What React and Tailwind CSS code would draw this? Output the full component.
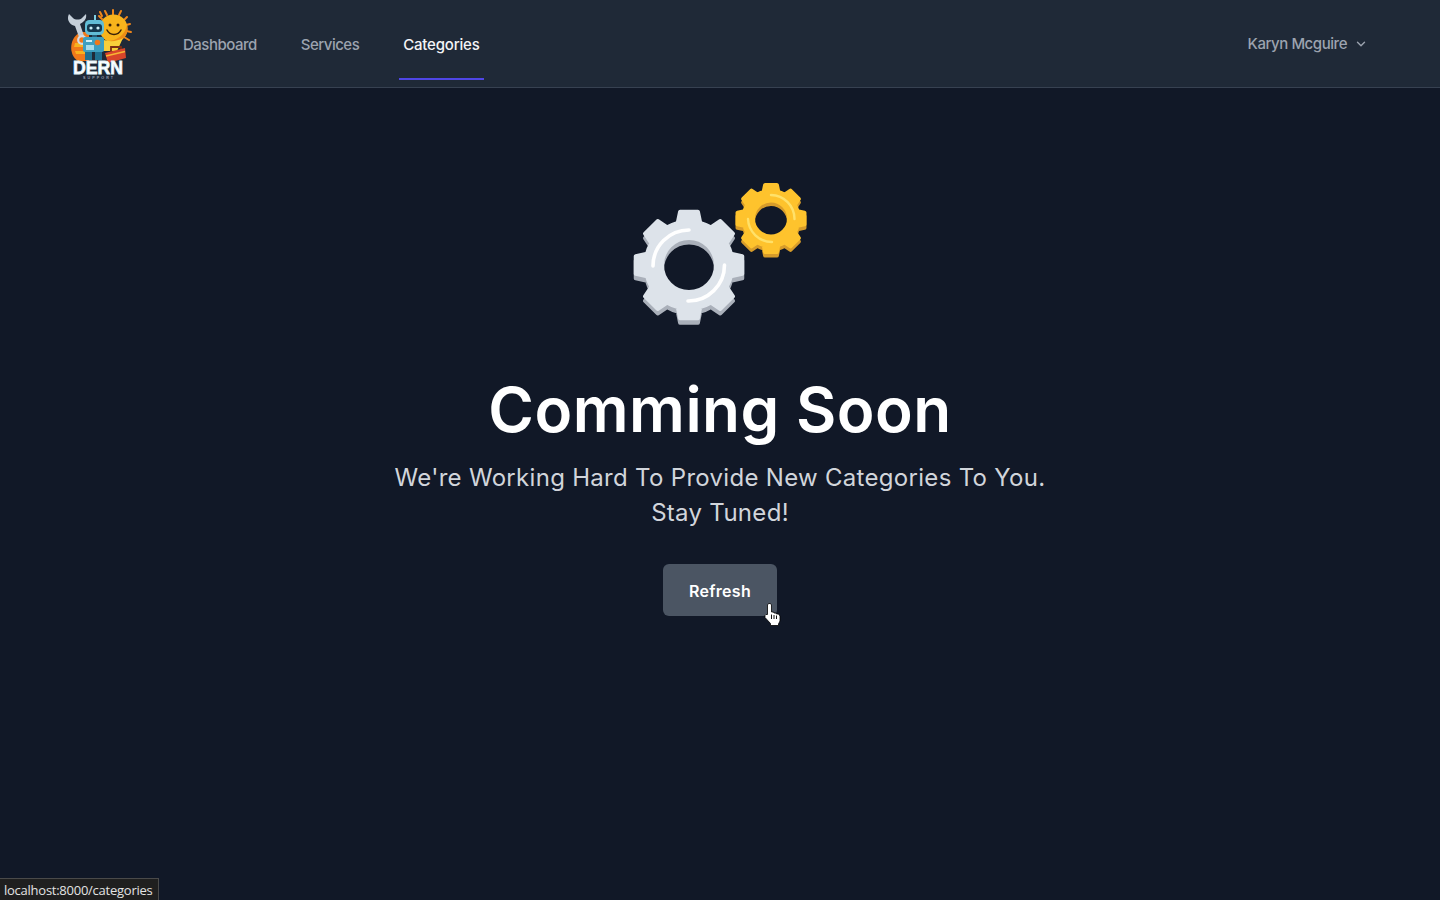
import React from 'react';
import { ChevronDown } from 'lucide-react';

// builds an 8-tooth gear outline with a hole, used for both the grey and yellow gears
const gearPath = (cx, cy, tip, root, tipHalf, rootHalf, hole) => {
  const pt = (r, deg) => {
    const a = ((deg - 90) * Math.PI) / 180;
    return `${(cx + r * Math.cos(a)).toFixed(2)} ${(cy + r * Math.sin(a)).toFixed(2)}`;
  };
  let d = '';
  for (let i = 0; i < 8; i++) {
    const c = i * 45;
    d += `${i === 0 ? 'M' : `A${root} ${root} 0 0 1`} ${pt(root, c - rootHalf)} `;
    d += `L${pt(tip, c - tipHalf)} L${pt(tip, c + tipHalf)} L${pt(root, c + rootHalf)} `;
  }
  d += `A${root} ${root} 0 0 1 ${pt(root, -rootHalf)} Z `;
  d += `M${cx - hole} ${cy} A${hole} ${hole} 0 1 0 ${cx + hole} ${cy} A${hole} ${hole} 0 1 0 ${cx - hole} ${cy} Z`;
  return d;
};

const Gears = () => (
  <svg width="176" height="146" viewBox="632 181 176 146" className="block">
    {/* grey gear */}
    <path d={gearPath(689, 269.500, 54, 43.500, 9.500, 15, 27)} fill="#aab0ba" stroke="#aab0ba" strokeWidth="4" strokeLinejoin="round" fillRule="evenodd" />
    <path d={gearPath(689, 265, 54, 43.500, 9.500, 15, 27)} fill="#dde3ea" stroke="#dde3ea" strokeWidth="4" strokeLinejoin="round" fillRule="evenodd" />
    <path d="M653 266A36 36 0 0 1 689 230" fill="none" stroke="#fff" strokeWidth="3.6" strokeLinecap="round" />
    <path d="M724.500 265A36 36 0 0 1 688 301" fill="none" stroke="#fff" strokeWidth="3.6" strokeLinecap="round" />
    {/* yellow gear */}
    <path d={gearPath(771, 222, 34, 27.500, 10, 15.500, 18)} fill="#d79c2a" stroke="#d79c2a" strokeWidth="4" strokeLinejoin="round" fillRule="evenodd" />
    <path d={gearPath(771, 218.500, 34, 27.500, 10, 15.500, 18)} fill="#fec32d" stroke="#fec32d" strokeWidth="4" strokeLinejoin="round" fillRule="evenodd" />
    <path d="M771 195A24 24 0 0 1 794.500 219" fill="none" stroke="#ffe169" strokeWidth="2.4" strokeLinecap="round" />
    <path d="M748 219A24 24 0 0 0 772 242" fill="none" stroke="#ffe169" strokeWidth="2.4" strokeLinecap="round" />
  </svg>
);

const Logo = () => (
  <svg width="66" height="72" viewBox="0 0 66 72" className="block shrink-0">
    {/* sun rays */}
    <g stroke="#f0861a" strokeWidth="2" strokeLinecap="round">
      <path d="M46 1V6M38 2l2 4M54 2l-2 4M32 7l3 3M60 8l-3 3M63 15l-4 1M64 23l-5-1M62 31l-5-3M33 3l2 4" />
    </g>
    <circle cx="46.500" cy="19.500" r="14" fill="#f8b41c" />
    <path d="M60 16A14 14 0 0 1 40 32C50 32 58 26 60 16Z" fill="#ee8c17" />
    <circle cx="43" cy="16" r="1.500" fill="#3b2208" />
    <circle cx="51" cy="16" r="1.500" fill="#3b2208" />
    <path d="M40 21c3 6 11 6 14 0" fill="none" stroke="#3b2208" strokeWidth="1.500" strokeLinecap="round" />
    {/* orange backdrop, yellow shoulder */}
    <path d="M14 23C2 28 1 46 11 52H22V23Z" fill="#f0791a" />
    <path d="M8 34 20 34 20 38 7 38ZM8 42 20 42 20 45 9 45Z" fill="#f9b21e" />
    <path d="M34 30C42 33 49 33 56 29L50 42H36Z" fill="#f8cf3a" />
    {/* wrench */}
    <path d="M2 5C-1 11 3 16 8 17L12 28L17 27L13 15C17 13 20 10 19 5L15 9C13 11 8 11 6 9Z" fill="#c5cfd9" />
    <circle cx="15" cy="31" r="3.800" fill="none" stroke="#d5dde5" strokeWidth="2.200" />
    {/* robot */}
    <rect x="27" y="6" width="2" height="5" fill="#7fcfe2" />
    <rect x="18" y="11" width="19" height="15" rx="4.500" fill="#62bdd6" />
    <rect x="20" y="15" width="15" height="8" rx="3" fill="#15384d" />
    <circle cx="24" cy="19" r="1.600" fill="#cdeff7" />
    <circle cx="31" cy="19" r="1.600" fill="#cdeff7" />
    <rect x="25" y="26" width="5" height="2" fill="#245b75" />
    <rect x="16" y="28" width="21" height="15" rx="2" fill="#3d9fc0" />
    <circle cx="30.500" cy="33.500" r="2.800" fill="#f0781a" />
    <rect x="19" y="31" width="6" height="2" fill="#cdeff7" />
    <rect x="19" y="36" width="8" height="5" fill="#a7dcea" />
    <rect x="18" y="43" width="7" height="8" fill="#1f6f8f" />
    <rect x="28" y="43" width="7" height="8" fill="#1f6f8f" />
    {/* toolbox */}
    <path d="M44 43V38H54V41" fill="none" stroke="#7c2d12" strokeWidth="1.800" />
    <path d="M38 44 58 39 59 49 41 54Z" fill="#d8452a" />
    <path d="M39 47 58 42.500" stroke="#f7b733" strokeWidth="1.500" />
    {/* wordmark */}
    <text x="31" y="65" textAnchor="middle" fontFamily="'Liberation Sans', sans-serif" fontWeight="700" fontSize="18" fill="#ffffff" stroke="#dff3fa" strokeWidth="0.8" textLength="50" lengthAdjust="spacingAndGlyphs">DERN</text>
    <text x="31" y="70" textAnchor="middle" fontFamily="'Liberation Sans', sans-serif" fontSize="3.6" fill="#cfd8e3" textLength="30">SUPPORT</text>
  </svg>
);

const HandCursor = () => (
  <svg width="17" height="23" viewBox="0 0 17 23" className="absolute left-[764px] top-[603px]">
    <path d="M4.500.5H6.500L7.500 2V9H9.500L10 10H12L12.500 11H14.500L16 13V18L14.500 21V22.500H6.500V20.500L1 14.500V12.500L2 11.500H3.500V2Z" fill="#fff" stroke="#000" strokeWidth="0.8" strokeLinejoin="round" />
    <path d="M7.500 11.500V16M10 12V16M12.500 12.500V16" stroke="#111" strokeWidth="1" />
  </svg>
);

const NavLink = ({ children, active }) => (
  <a
    href="#"
    className={
      active
        ? 'inline-flex h-20 items-center border-b-2 border-[#4f46e5] px-1 pt-[13px] text-[15px] font-medium tracking-[-0.2px] text-[#f3f4f6]'
        : 'inline-flex h-20 items-center border-b-2 border-transparent px-1 pt-[13px] text-[15px] font-medium tracking-[-0.5px] text-[#9ca3af]'
    }
  >
    {children}
  </a>
);

export default function App() {
  return (
    <div className="relative h-[900px] overflow-hidden bg-[#111827] font-['Inter','Noto_Sans',sans-serif]">
      <nav className="flex h-[88px] items-start justify-between border-b border-[#374151] bg-[#1f2937] pl-[67px] pr-[72px]">
        <div className="flex items-start">
          <div className="pt-[9px]">
            <Logo />
          </div>
          <div className="ml-[46px] flex gap-9">
            <NavLink>Dashboard</NavLink>
            <NavLink>Services</NavLink>
            <NavLink active>Categories</NavLink>
          </div>
        </div>
        <button className="flex h-[88px] items-center gap-[7px] text-[15px] font-medium tracking-[-0.45px] text-[#9ca3af]">
          Karyn Mcguire
          <ChevronDown size={14} strokeWidth={2.4} />
        </button>
      </nav>

      <main className="flex flex-col items-center pt-[93px]">
        <Gears />
        <h1 className="mt-[47px] text-[62px] font-semibold leading-[72px] tracking-[0.5px] text-white">Comming Soon</h1>
        <p className="mt-[14px] text-center text-[24px] leading-[35px] tracking-[0.3px] text-[#d1d5db]">
          We're Working Hard To Provide New Categories To You.
          <br />
          Stay Tuned!
        </p>
        <button className="mt-[34px] h-[52px] w-[114px] rounded-md bg-[#4b5563] pt-[2px] text-[16px] font-semibold tracking-[0.3px] text-white">
          Refresh
        </button>
      </main>

      <HandCursor />

      <div className="absolute bottom-0 left-0 h-[22px] border-t border-r border-[#4a4a4a] bg-[#1f1f1f] pl-1 pr-[6px] font-['Open_Sans',sans-serif] text-[13px] leading-[22px] tracking-[-0.25px] text-[#e3e3e3]">
        localhost:8000/categories
      </div>
    </div>
  );
}
